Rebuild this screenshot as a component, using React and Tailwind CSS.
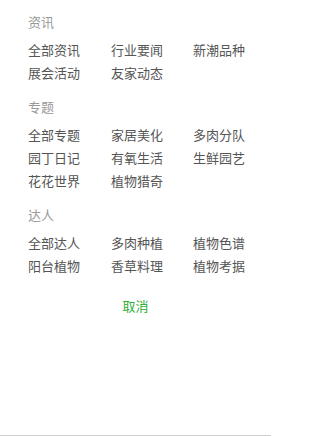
import React from 'react';

const sections = [
    { title: '资讯', items: ['全部资讯', '行业要闻', '新潮品种', '展会活动', '友家动态'] },
    { title: '专题', items: ['全部专题', '家居美化', '多肉分队', '园丁日记', '有氧生活', '生鲜园艺', '花花世界', '植物猎奇'] },
    { title: '达人', items: ['全部达人', '多肉种植', '植物色谱', '阳台植物', '香草料理', '植物考据'] },
];

const App = () => {
    return (
        <div
            className="h-[436px] w-[271px] bg-white border-b border-[#cfcfcf] pt-[10px]"
            style={{ fontFamily: '"Noto Sans CJK SC", "Noto Sans", sans-serif' }}
        >
            {sections.map((s) => (
                <div key={s.title} className="pl-[28px] mb-[11px]">
                    <h2 className="text-[13px] leading-[23px] text-[#9a9a9a] mb-[5px]">{s.title}</h2>
                    <div className="grid grid-cols-[83px_82px_auto]">
                        {s.items.map((item) => (
                            <span key={item} className="whitespace-nowrap text-[13px] leading-[23px] text-[#555555]">
                                {item}
                            </span>
                        ))}
                    </div>
                </div>
            ))}
            <div className="mt-[17px] text-center text-[13px] leading-[23px] text-[#2fae3a]">取消</div>
        </div>
    );
};

export default App;
